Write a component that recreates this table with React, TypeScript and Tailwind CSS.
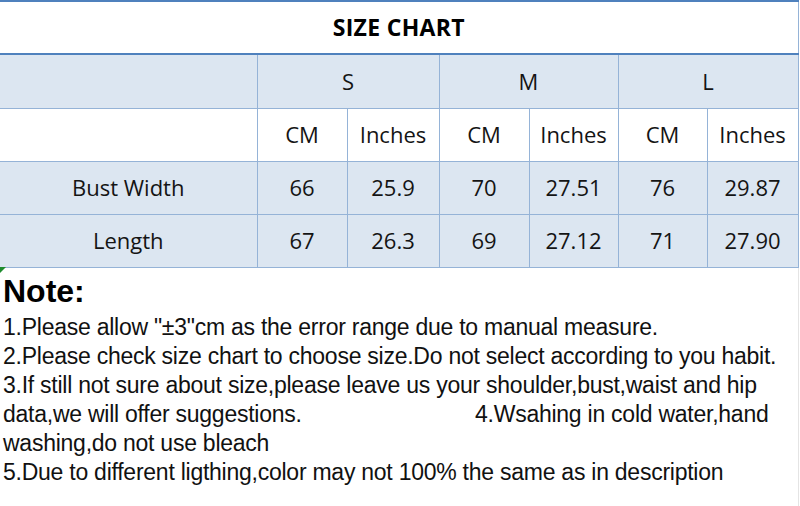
import React from 'react';

const sizes = ['S', 'M', 'L'];

const rows = [
  { label: 'Bust Width', values: ['66', '25.9', '70', '27.51', '76', '29.87'] },
  { label: 'Length', values: ['67', '26.3', '69', '27.12', '71', '27.90'] },
];

const cell = 'border border-[#95b3d7] text-center align-middle';

export default function App() {
  return (
    <div className="w-[800px] h-[506px] bg-white overflow-hidden relative">
      <table
        className="table-fixed border-collapse w-[798px] text-[#141414] text-[22px]"
        style={{ fontFamily: '"Open Sans", sans-serif' }}
      >
        <colgroup>
          <col className="w-[257px]" />
          <col className="w-[90px]" />
          <col className="w-[92px]" />
          <col className="w-[90px]" />
          <col className="w-[89px]" />
          <col className="w-[89px]" />
          <col className="w-[91px]" />
        </colgroup>
        <tbody>
          <tr className="h-[53px]">
            <td
              colSpan={7}
              className="border-t-2 border-b-2 border-r border-[#4f81bd] border-r-[#95b3d7] text-center font-bold text-[23px] text-black tracking-[0.3px]"
            >
              SIZE CHART
            </td>
          </tr>
          <tr className="h-[54px] bg-[#dce6f1]">
            <td className="border-r border-b border-[#95b3d7]"></td>
            {sizes.map((s) => (
              <td key={s} colSpan={2} className={cell}>
                {s}
              </td>
            ))}
          </tr>
          <tr className="h-[53px] bg-white">
            <td className="border-r border-b border-[#95b3d7]"></td>
            {sizes.map((s) => (
              <React.Fragment key={s}>
                <td className={cell}>CM</td>
                <td className={cell}>Inches</td>
              </React.Fragment>
            ))}
          </tr>
          {rows.map((r) => (
            <tr key={r.label} className="h-[53px] bg-[#dce6f1]">
              <td className="border-r border-b border-[#95b3d7] text-center">{r.label}</td>
              {r.values.map((v, i) => (
                <td key={i} className={cell}>
                  {v}
                </td>
              ))}
            </tr>
          ))}
        </tbody>
      </table>

      <div className="absolute left-0 top-[267px] w-0 h-0 border-t-[6px] border-r-[6px] border-t-[#1e8c2e] border-r-transparent"></div>

      <div
        className="pl-[3px] pt-[6px] text-black border-r border-[#e4e4e4] w-[799px] h-[239px]"
        style={{ fontFamily: '"Liberation Sans", Arial, sans-serif' }}
      >
        <div className="text-[32px] font-bold leading-[34px] mb-[5px]">Note:</div>
        <div className="text-[23px] leading-[29px] tracking-[-0.25px] text-[#111]">
          <div>1.Please allow "±3"cm as the error range due to manual measure.</div>
          <div>2.Please check size chart to choose size.Do not select according to you habit.</div>
          <div>3.If still not sure about size,please leave us your shoulder,bust,waist and hip</div>
          <div>
            <span className="inline-block w-[472px]">data,we will offer suggestions.</span>
            <span>4.Wsahing in cold water,hand</span>
          </div>
          <div>washing,do not use bleach</div>
          <div>5.Due to different ligthing,color may not 100% the same as in description</div>
        </div>
      </div>
    </div>
  );
}
